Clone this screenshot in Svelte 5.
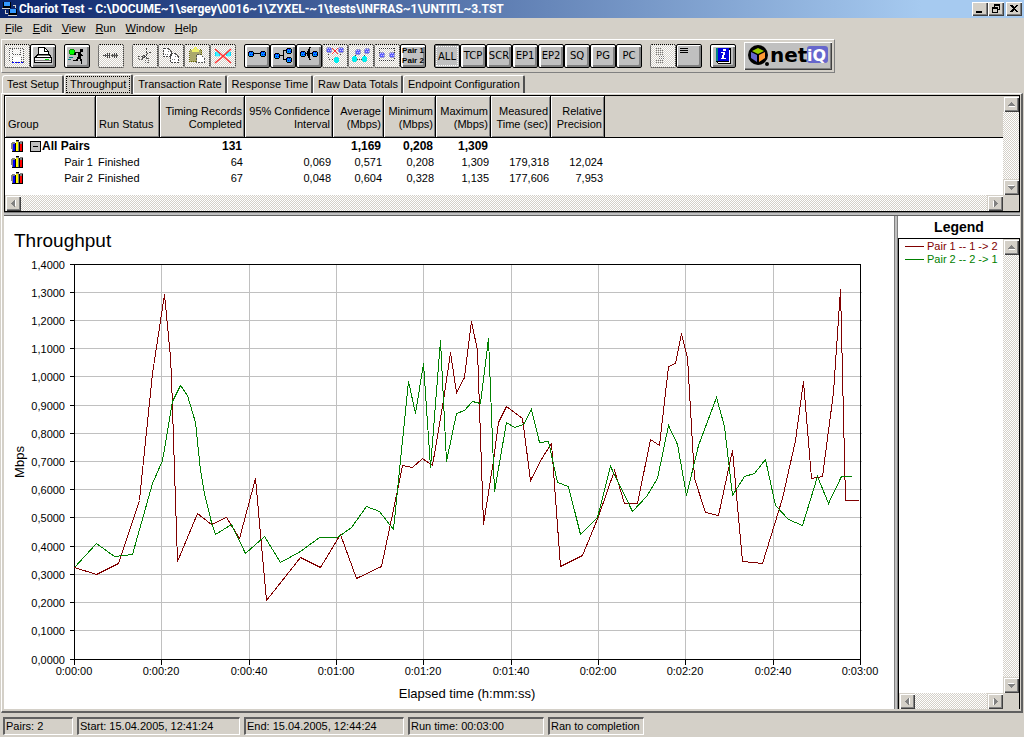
<script lang="ts">
    let activeTab = "Throughput";
    let filter = "ALL";

    const menus = ["File", "Edit", "View", "Run", "Window", "Help"];

    const tools = [
        [
            { icon: "save", title: "Save", off: true },
            { icon: "print", title: "Print" },
        ],
        [{ icon: "run", title: "Run" }],
        [{ icon: "back", title: "Stop", off: true }],
        [
            { icon: "cut", title: "Cut", off: true },
            { icon: "copy", title: "Copy", off: true },
            { icon: "paste", title: "Paste", off: true },
            { icon: "delete", title: "Delete", off: true },
        ],
        [
            { icon: "pair", title: "Add pair" },
            { icon: "group", title: "Add multicast group" },
            { icon: "voip", title: "Add VoIP pair" },
            { icon: "edit", title: "Edit pair", off: true },
            { icon: "replicate", title: "Replicate", off: true },
            { icon: "swap", title: "Swap endpoints", off: true },
            { icon: "pairs", title: "Show pairs" },
        ],
    ];

    const filters = ["ALL", "TCP", "SCR", "EP1", "EP2", "SQ", "PG", "PC"];

    const tabs = [
        "Test Setup",
        "Throughput",
        "Transaction Rate",
        "Response Time",
        "Raw Data Totals",
        "Endpoint Configuration",
    ];

    const columns = [
        ["Timing Records", "Completed"],
        ["95% Confidence", "Interval"],
        ["Average", "(Mbps)"],
        ["Minimum", "(Mbps)"],
        ["Maximum", "(Mbps)"],
        ["Measured", "Time (sec)"],
        ["Relative", "Precision"],
    ];

    const rows = [
        { name: "Pair 1", status: "Finished", cells: ["64", "0,069", "0,571", "0,208", "1,309", "179,318", "12,024"] },
        { name: "Pair 2", status: "Finished", cells: ["67", "0,048", "0,604", "0,328", "1,135", "177,606", "7,953"] },
    ];

    const totals = ["131", "", "1,169", "0,208", "1,309", "", ""];

    const series = [
        {
            label: "Pair 1 -- 1 -> 2",
            color: "#800000",
            points: "74,567 96,574 118,563 139,500 142,470 152,373 164,294 170,357 171,377 174,470 177,561 197,513 211,524 226,517 239,538 255,478 266,600 300,557 320,567 340,534 356,578 381,566 397,490 402,465 412,467 422,458 432,465 443,400 450,352 456,392 464,377 471,321 477,350 483,524 493,460 498,422 506,406 522,418 530,480 542,457 551,443 560,566 582,555 598,516 614,470 624,503 637,503 650,439 659,445 668,366 675,363 681,333 687,357 694,478 705,512 718,515 732,450 742,561 762,563 782,498 795,440 803,381 811,478 822,476 833,392 840,289 845,500 858,500",
        },
        {
            label: "Pair 2 -- 2 -> 1",
            color: "#008000",
            points: "74,567 96,543 114,556 132,554 152,483 162,460 172,401 180,385 187,395 195,422 200,470 204,493 211,522 215,534 231,524 245,553 264,536 280,562 300,551 319,537 337,537 351,527 366,506 379,511 393,529 408,381 415,413 423,363 430,467 440,340 446,461 456,413 464,410 472,401 480,403 488,338 494,491 506,422 514,427 523,424 531,409 539,442 548,441 557,482 568,486 580,534 597,517 610,466 632,511 646,496 657,478 668,425 677,444 686,495 698,445 716,397 724,426 732,495 744,476 754,473 765,459 775,505 788,519 802,525 817,476 828,503 841,476 851,476",
        },
    ];

    // plot area of the graph
    const left = 74;
    const right = 860;
    const top = 264;
    const bottom = 659;

    const yTicks = Array.from({ length: 15 }, (_, i) => ({
        y: Math.floor(bottom - ((bottom - top) * i) / 14),
        text: (i / 10).toFixed(4).replace(".", ","),
    }));

    const xTicks = Array.from({ length: 10 }, (_, i) => ({
        x: Math.round(left + ((right - left) * i) / 9),
        text: `0:0${Math.floor(i / 3)}:${i % 3 === 0 ? "00" : (i % 3) * 20}`,
    }));

    const status = [
        { text: "Pairs: 2", size: "xs" },
        { text: "Start: 15.04.2005, 12:41:24", size: "xl" },
        { text: "End: 15.04.2005, 12:44:24", size: "lg" },
        { text: "Run time: 00:03:00", size: "md" },
        { text: "Ran to completion", size: "sm" },
    ];
</script>

{#snippet node(x, y, pale)}
    <rect x={x + 1} {y} width="4" height="6" fill={pale ? "#99c" : "#000"} />
    <rect {x} y={y + 1} width="6" height="4" fill={pale ? "#99c" : "#000"} />
    <rect x={x + 1} y={y + 1} width="4" height="4" fill={pale ? "#5b5bff" : "#09f"} />
    <path d="M{x + 1} {y + 1}h1v1h-1zM{x + 3} {y + 1}h1v1h-1zM{x + 2} {y + 3}h1v1h-1zM{x + 4} {y + 3}h1v1h-1z" fill={pale ? "#ccf" : "#00f"} />
{/snippet}

{#snippet icon(kind)}
    <svg width="24" height="22" viewBox="0 0 24 22" fill="none" shape-rendering="crispEdges" aria-hidden="true">
        {#if kind === "save"}
            <path d="M5 3h14v15H7l-2-2z" fill="#fff" opacity=".6" />
            <path d="M4.500 3.500h14v14h-12l-2-2zM7.500 3.500v6h8v-6M7.500 17v-5h9v5" stroke="#555" stroke-dasharray="1 1" />
            <path d="M8 12h8v4h-8z" fill="#fff" />
            <path d="M7 17.500h12" stroke="#00f" stroke-dasharray="2 1" />
        {:else if kind === "print"}
            <path d="M7.500 10.500v-8h6l4 4v4" fill="#fff" stroke="#000" />
            <path d="M13.500 2.500v4h4" stroke="#000" />
            <path d="M3 13l3-4h13l2 4v5h-18z" fill="#000" />
            <path d="M5 12l2-2h11l1 2z" fill="#fff" />
            <path d="M4 13h16v4h-16z" fill="#eee" />
            <path d="M7 10h11M4 15.500h16" stroke="#808080" />
            <rect x="14" y="14" width="4" height="1" fill="#0d0" />
        {:else if kind === "run"}
            <rect x="5" y="4" width="4" height="6" fill="#009000" />
            <rect x="4" y="5" width="6" height="4" fill="#009000" />
            <rect x="5" y="5" width="4" height="4" fill="#0f0" />
            <rect x="15" y="4" width="3" height="3" fill="#000" />
            <path d="M10 7h6v1h-6zM9 8h2v2H9zM13 8h3v5h-3zM16 9h1v1h1v1h-2zM12 12h2v2h-2zM14 12h2v2h-2zM15 14h2v2h-2zM16 16h1v3h-1zM11 14h2v2h-2zM8 15h3v1H8z" fill="#000" />
            <path d="M4 12.500h4M3 14.500h3" stroke="#008080" />
        {:else if kind === "back"}
            <path d="M4 10.500h16M6 9.500h5M6 11.500h5M8 8.500h3M8 12.500h3M13 9.500h6M13 11.500h6M15 8.500h4M15 12.500h4" stroke="#444" stroke-dasharray="1 1" />
            <path d="M5 10.500h5M12 10.500h6" stroke="#555" />
        {:else if kind === "cut"}
            <path d="M13.500 3v7l-4 4M4.500 11.500h4l3-1 7-4M11.500 10l3 4" stroke="#444" stroke-dasharray="2 1" />
            <path d="M5.500 11.500h4v3h-4zM12.500 13.500h3v4h-3z" stroke="#666" stroke-dasharray="1 1" />
        {:else if kind === "copy"}
            <path d="M4.500 3.500h5l3 3v5h-8zM11.500 8.500h5l3 3v6h-8z" fill="#fff" stroke="#444" stroke-dasharray="2 1" />
            <path d="M9.500 3.500v3h3M16.500 8.500v3h3M6 9.500h4M13 14.500h4" stroke="#777" stroke-dasharray="1 1" />
        {:else if kind === "paste"}
            <path d="M4.500 4.500h12v12h-12z" fill="#aaa86b" stroke="#666600" stroke-dasharray="1 1" />
            <path d="M7 4h2v-2h3v2h2v3H7z" fill="#eef06a" />
            <path d="M11.500 9.500h4l4 4v4h-8z" fill="#fff" stroke="#555" stroke-dasharray="2 1" />
        {:else if kind === "delete"}
            <path d="M4 7h5v4H4zM15 7h5v4h-5z" fill="#0df" />
            <path d="M5 6h3v6H5zM16 6h3v6h-3z" fill="#7ff" opacity=".6" />
            <path d="M4 4l16 14M4 18l6-5 10-9" stroke="#f33" stroke-width="1.500" shape-rendering="auto" />
        {:else if kind === "pair"}
            <path d="M8 8.500h8" stroke="#000" />
            {@render node(3, 6, false)}
            {@render node(15, 6, false)}
        {:else if kind === "group"}
            <path d="M8 10.500h4M12.500 5.500v9M12 5.500h4M12 14.500h4" stroke="#000" />
            {@render node(3, 8, false)}
            {@render node(15, 3, false)}
            {@render node(15, 12, false)}
        {:else if kind === "voip"}
            <path d="M8 8.500h8" stroke="#000" />
            <path d="M12 2h2v1h-1v11h1v1h-2v-2h-1V4h1zM10 6h1v5h-1z" fill="#000" />
            {@render node(3, 6, false)}
            {@render node(15, 6, false)}
        {:else if kind === "edit"}
            <path d="M9 3l6 6M15 3l-6 6" stroke="#f33" />
            <path d="M5.500 9v5.500h5M17.500 9v3" stroke="#444" stroke-dasharray="1 2" />
            {@render node(3, 2, true)}
            {@render node(15, 2, true)}
            <path d="M12 12h3v6h-3zM11 13h5v4h-5z" fill="#0ee" />
        {:else if kind === "replicate"}
            <path d="M6 11l6-6M13 14l6-8M8 14.500h5" stroke="#444" stroke-dasharray="1 1" />
            {@render node(6, 4, true)}
            {@render node(15, 3, true)}
            <path d="M3 12h5v4H3zM4 11h3v6H4zM13 12h5v4h-5zM14 11h3v6h-3z" fill="#0ee" />
        {:else if kind === "swap"}
            <path d="M4 3.500h16M4 15.500h16M4.500 3v12M19.500 3v12" stroke="#333" stroke-dasharray="1 1" />
            {@render node(4, 7, true)}
            {@render node(14, 7, true)}
        {:else if kind === "lines"}
            <path d="M5 3.500h5M5 5.500h8M5 7.500h8M5 9.500h8M8 11.500h5M8 13.500h5M5 15.500h8M5 17.500h8" stroke="#777" stroke-dasharray="1 1" />
        {:else if kind === "summary"}
            <path d="M3 3.500h8M3 5.500h8M3 7.500h8" stroke="#000" />
        {:else if kind === "info"}
            <path d="M5 3h15v16H7l-2-2z" fill="#000" />
            <path d="M6 17h12v1H7zM18 5h1v13h-1z" fill="#fff" />
            <path d="M7 3h11v13H7z" fill="#0000e0" />
            <path d="M5 3h2v13H5z" fill="#008080" />
            <path d="M12 4h3v2h-3zM10 7h4l-1 6h2v1h-5v-1h1l1-5h-2z" fill="#fff" />
        {/if}
    </svg>
{/snippet}

{#snippet arrow(dir)}
    <button class="arrow" aria-label="Scroll {dir}">
        <svg class={dir} width="7" height="7" viewBox="0 0 7 7" shape-rendering="crispEdges">
            <path d="M1 6h7L4 2z" fill="#fff" />
            <path d="M0 5h7L3.500 1z" fill="#808080" />
        </svg>
    </button>
{/snippet}

{#snippet bars()}
    <svg class="bars" width="13" height="12" viewBox="0 0 13 12" shape-rendering="crispEdges" aria-hidden="true">
        <path d="M0 3h1V2h3v1h1V0h3v2h1V1h3v10H1V9H0z" fill="#808080" />
        <path d="M4 3h1v8H4zM8 2h1v9H8zM11 2h1v9h-1zM1 11h11v1H1zM5 0h3v1H5z" fill="#000" />
        <path d="M2 4h2v7H2z" fill="#00f" />
        <path d="M5 2h2v9H5z" fill="#ff0" />
        <path d="M9 4h2v7H9z" fill="#f00" />
    </svg>
{/snippet}

<div class="window">
    <header class="titlebar">
        <svg width="16" height="16" viewBox="0 0 16 16" shape-rendering="crispEdges" aria-hidden="true">
            <path d="M1 1h8v6H1zM7 8h8v6H7z" fill="#000" />
            <path d="M2 1h6v4H2zM8 8h6v4H8z" fill="#39f" />
            <path d="M0 7h8v1H0zM6 14h9v1H6z" fill="#ccc" />
            <path d="M3 9v3h3M11 4h2v3" fill="none" stroke="#d4d0c8" />
        </svg>
        <h1>Chariot Test - C:\DOCUME~1\sergey\0016~1\ZYXEL-~1\tests\INFRAS~1\UNTITL~3.TST</h1>
        <div class="controls">
            <button aria-label="Minimize">
                <svg width="12" height="10" shape-rendering="crispEdges"><path d="M2 7h6v2H2z" /></svg>
            </button>
            <button aria-label="Restore">
                <svg width="12" height="10" shape-rendering="crispEdges">
                    <path d="M4 0h6v6H8V5h1V2H5v1H4zM2 3h6v6H2zM3 5v3h4V5z" fill-rule="evenodd" />
                </svg>
            </button>
            <button class="close" aria-label="Close">
                <svg width="12" height="10" shape-rendering="crispEdges">
                    <path d="M2 1h2l2 2 2-2h2L7 4.500 10 8H8L6 6 4 8H2l3-3.500z" />
                </svg>
            </button>
        </div>
    </header>

    <nav class="menu">
        {#each menus as item}
            <button><u>{item[0]}</u>{item.slice(1)}</button>
        {/each}
    </nav>

    <div class="toolbar">
        {#each tools as group}
            <div class="group">
                {#each group as tool}
                    <button class="tool" class:off={tool.off} disabled={tool.off} aria-label={tool.title}>
                        {#if tool.icon === "pairs"}
                            <span class="pairs">Pair 1<br />Pair 2</span>
                        {:else}
                            {@render icon(tool.icon)}
                        {/if}
                    </button>
                {/each}
            </div>
        {/each}
        <div class="group">
            {#each filters as name}
                <button class="tool filter" class:pressed={filter === name} on:click={() => (filter = name)}>{name}</button>
            {/each}
        </div>
        <div class="group">
            <button class="tool off" disabled aria-label="Details">{@render icon("lines")}</button>
            <button class="tool flat" aria-label="Summary">{@render icon("summary")}</button>
        </div>
        <div class="group">
            <button class="tool" aria-label="Help">{@render icon("info")}</button>
        </div>
        <button class="brand" aria-label="NetIQ">
            <svg width="84" height="24" viewBox="0 0 84 24">
                <circle cx="12" cy="11" r="10" fill="#000" />
                <path d="M6 7l6-3 6 3-6 3z" fill="#9c0" />
                <path d="M5 8l6 3v7l-6-4z" fill="#66c" />
                <path d="M19 8l-6 3v7l6-4z" fill="#f93" />
                <circle cx="21" cy="20" r="2" fill="#000" />
                <text x="24" y="18" class="net">net</text>
                <rect x="61" y="2" width="21" height="17" rx="3" fill="#66c" />
                <text x="61" y="17" class="iq">iQ</text>
            </svg>
        </button>
    </div>

    <div class="tabs" role="tablist">
        {#each tabs as tab}
            <button role="tab" aria-selected={tab === activeTab} class:active={tab === activeTab} on:click={() => (activeTab = tab)}>
                <span>{tab}</span>
            </button>
        {/each}
    </div>

    <main>
        <section class="results">
            <div class="sheet">
                <table>
                    <colgroup>
                        <col class="c-group" /><col class="c-status" /><col class="c-timing" />
                        <col class="c-conf" /><col class="c-avg" /><col class="c-min" />
                        <col class="c-max" /><col class="c-time" /><col class="c-prec" /><col />
                    </colgroup>
                    <thead>
                        <tr>
                            <th class="start">Group</th>
                            <th class="start">Run Status</th>
                            {#each columns as col}
                                <th>{col[0]}<br />{col[1]}</th>
                            {/each}
                            <th class="rest"></th>
                        </tr>
                    </thead>
                    <tbody>
                        <tr class="total">
                            <td class="name">
                                <div>
                                    {@render bars()}
                                    <button class="toggle" aria-label="Collapse"></button>
                                    <span>All Pairs</span>
                                </div>
                            </td>
                            <td></td>
                            {#each totals as cell}
                                <td>{cell}</td>
                            {/each}
                            <td></td>
                        </tr>
                        {#each rows as row}
                            <tr>
                                <td class="name">
                                    <div>
                                        {@render bars()}
                                        <span class="child">{row.name}</span>
                                    </div>
                                </td>
                                <td class="start">{row.status}</td>
                                {#each row.cells as cell}
                                    <td>{cell}</td>
                                {/each}
                                <td></td>
                            </tr>
                        {/each}
                    </tbody>
                </table>
            </div>
            <div class="vscroll">{@render arrow("up")}{@render arrow("down")}</div>
            <div class="hscroll">{@render arrow("left")}{@render arrow("right")}</div>
        </section>

        <div class="split"></div>

        <div class="lower">
            <section class="graph">
                <svg viewBox="4 216 890 493" role="img" aria-label="Throughput">
                    <text x="14" y="247" class="heading">Throughput</text>
                    <g shape-rendering="crispEdges" fill="none" transform="translate(0.5 0.5)">
                        {#each yTicks.slice(1, -1) as t}
                            <path d="M{left} {t.y}H{right + 1}" stroke="#c0c0c0" />
                        {/each}
                        {#each xTicks.slice(1, -1) as t}
                            <path d="M{t.x} {top}V{bottom}" stroke="#c0c0c0" />
                        {/each}
                        <rect x={left} y={top} width={right - left} height={bottom - top} stroke="#000" />
                        {#each yTicks as t}
                            <path d="M{left - 5} {t.y}H{left}" stroke="#000" />
                        {/each}
                        {#each xTicks as t}
                            <path d="M{t.x} {bottom}v5" stroke="#000" />
                        {/each}
                        {#each series as s}
                            <polyline points={s.points} stroke={s.color} />
                        {/each}
                    </g>
                    {#each yTicks as t}
                        <text x="65" y={t.y + 5} text-anchor="end">{t.text}</text>
                    {/each}
                    {#each xTicks as t}
                        <text x={t.x} y="675" text-anchor="middle">{t.text}</text>
                    {/each}
                    <text class="axis" x="467" y="698" text-anchor="middle">Elapsed time (h:mm:ss)</text>
                    <text class="axis" transform="translate(24 462) rotate(-90)" text-anchor="middle">Mbps</text>
                </svg>
            </section>
            <div class="vsplit"></div>
            <aside class="legend">
                <h2>Legend</h2>
                <div class="legend-body">
                    <ul>
                        {#each series as s}
                            <li style:color={s.color}><i></i>{s.label}</li>
                        {/each}
                    </ul>
                    <div class="vscroll">{@render arrow("up")}{@render arrow("down")}</div>
                    <div class="hscroll">{@render arrow("left")}{@render arrow("right")}</div>
                </div>
            </aside>
        </div>
    </main>

    <footer>
        {#each status as s}
            <span class={s.size}>{s.text}</span>
        {/each}
    </footer>
</div>

<style>
    :global(body) {
        background: #d4d0c8;
    }

    .window {
        font: 11px/13px "Liberation Sans", Arial, sans-serif;
        color: #000;
    }

    button {
        font: inherit;
        color: inherit;
        background: #d4d0c8;
        border: none;
        padding: 0;
        margin: 0;
        box-sizing: border-box;
    }

    svg {
        display: block;
    }

    .titlebar {
        display: flex;
        align-items: center;
        height: 18px;
        padding: 0 2px;
        background: linear-gradient(to right, #0a246a, #a6caf0 90%);
    }

    h1 {
        flex: 1;
        margin: 0 0 0 1px;
        font: bold 12px/18px Roboto, "DejaVu Sans Condensed", sans-serif;
        color: #fff;
        white-space: nowrap;
        overflow: hidden;
    }

    .controls {
        display: flex;
    }

    .controls button {
        width: 16px;
        height: 14px;
        padding: 2px;
        box-shadow: inset 1px 1px #fff, inset -1px -1px #404040, inset -2px -2px #808080;
    }

    .controls .close {
        margin-left: 2px;
    }

    .menu {
        display: flex;
        height: 21px;
    }

    .menu button {
        padding: 0 5px;
    }

    .toolbar {
        display: flex;
        align-items: center;
        gap: 8px;
        width: fit-content;
        height: 34px;
        box-sizing: border-box;
        margin-left: 1px;
        padding: 0 2px;
        border: 1px solid #808080;
        border-top-color: #fff;
        border-left-color: #fff;
    }

    .group {
        display: flex;
    }

    .tool {
        width: 26px;
        height: 24px;
        border: 1px solid #000;
        border-radius: 2px;
        background: #c0c0c0;
        box-shadow: inset 2px 2px #fff, inset -2px -2px #808080;
    }

    .tool.off {
        border: 1px dotted #000;
        background: repeating-conic-gradient(#d4d0c8 0 25%, #fff 0 50%) 0 0 / 2px 2px;
        box-shadow: none;
    }

    .tool.flat {
        box-shadow: inset 1px 1px #fff, inset -2px -2px #808080;
    }

    .filter {
        font: 10px/20px "DejaVu Sans", Verdana, sans-serif;
    }

    .filter.pressed {
        padding-top: 2px;
        box-shadow: inset 1px 1px #808080;
        outline: 1px dotted #fff;
        outline-offset: -3px;
    }

    .pairs {
        display: block;
        font: bold 8px/10px "Liberation Sans", Arial, sans-serif;
        white-space: nowrap;
    }

    .brand {
        width: 88px;
        height: 28px;
        padding: 2px;
        background: #c0c0c0;
        box-shadow: inset 1px 1px #fff, inset -1px -1px #404040, inset -2px -2px #808080;
    }

    .net,
    .iq {
        font: bold 20px "DejaVu Sans", Verdana, sans-serif;
    }

    .iq {
        font-size: 16px;
        fill: #fff;
    }

    .tabs {
        display: flex;
        align-items: flex-end;
        height: 20px;
        padding-left: 2px;
    }

    .tabs button {
        height: 18px;
        padding: 0 3px 0 4px;
        border: 1px solid #fff;
        border-right: 2px solid #505050;
        border-bottom: none;
        border-radius: 3px 2px 0 0;
    }

    .tabs .active {
        height: 20px;
        padding: 0 1px;
        margin-bottom: -1px;
        position: relative;
    }

    .active span {
        display: block;
        height: 17px;
        padding: 0 4px;
        line-height: 16px;
        outline: 1px dotted #000;
        outline-offset: -1px;
    }

    main {
        margin: 0 1px;
        padding: 1px 1px 2px 2px;
        border: 1px solid #fff;
        border-right: 2px solid #606060;
        border-bottom: 2px solid #606060;
    }

    .results {
        display: grid;
        grid-template-columns: 1fr 16px;
        border: 1px solid #000;
    }

    .sheet {
        overflow: hidden;
        background: #fff;
        padding-bottom: 9px;
    }

    table {
        width: 100%;
        table-layout: fixed;
        border-collapse: separate;
        border-spacing: 0;
    }

    .c-group { width: 91px; }
    .c-status { width: 64px; }
    .c-timing { width: 85px; }
    .c-conf { width: 88px; }
    .c-avg { width: 51px; }
    .c-min { width: 52px; }
    .c-max { width: 55px; }
    .c-time { width: 60px; }
    .c-prec { width: 54px; }

    th {
        height: 42px;
        box-sizing: border-box;
        padding: 0 2px 6px;
        font-weight: normal;
        text-align: right;
        vertical-align: bottom;
        white-space: nowrap;
        background: #d4d0c8;
        border-right: 1px solid #000;
        border-bottom: 1px solid #000;
        box-shadow: inset 1px 1px #fff, inset -1px -1px #808080;
    }

    th.start {
        text-align: left;
        padding-left: 3px;
    }

    th.rest {
        border-right: none;
        box-shadow: none;
    }

    td {
        height: 16px;
        padding: 0 2px;
        line-height: 16px;
        text-align: right;
        white-space: nowrap;
    }

    td.start {
        text-align: left;
    }

    .total {
        font-size: 12px;
        font-weight: bold;
    }

    .total td {
        padding-right: 3px;
    }

    .name div {
        display: flex;
        align-items: center;
        padding-left: 4px;
    }

    .toggle {
        flex: none;
        width: 11px;
        height: 11px;
        margin: 0 1px 0 6px;
        border: 1px solid #000;
        background: linear-gradient(#000, #000) center / 5px 1px no-repeat #c0c0c0;
    }

    .bars {
        flex: none;
    }

    .child {
        margin-left: auto;
        padding-right: 1px;
    }

    .vscroll,
    .hscroll {
        display: flex;
        justify-content: space-between;
        background: repeating-conic-gradient(#d4d0c8 0 25%, #fff 0 50%) 0 0 / 2px 2px;
    }

    .vscroll {
        flex-direction: column;
    }

    .arrow {
        display: flex;
        align-items: center;
        justify-content: center;
        width: 16px;
        height: 16px;
        box-shadow: inset 1px 1px #d4d0c8, inset 2px 2px #fff, inset -1px -1px #404040, inset -2px -2px #808080;
    }

    .down { transform: rotate(180deg); }
    .left { transform: rotate(-90deg); }
    .right { transform: rotate(90deg); }

    .split {
        height: 4px;
        background: linear-gradient(#808080 1px, #c0c0c0 1px 3px, #606060 3px);
    }

    .lower {
        display: flex;
    }

    .graph {
        flex: 1;
        min-width: 0;
        background: #fff;
    }

    .graph svg {
        width: 100%;
    }

    .heading {
        font-size: 19px;
    }

    .axis {
        font-size: 13px;
    }

    .vsplit {
        width: 4px;
        background: linear-gradient(to right, #808080 1px, #c0c0c0 1px 3px, #808080 3px);
    }

    .legend {
        display: flex;
        flex-direction: column;
        width: 122px;
        background: #fff;
    }

    h2 {
        margin: 0;
        font-size: 14px;
        line-height: 22px;
        text-align: center;
    }

    .legend-body {
        flex: 1;
        display: grid;
        grid-template: 1fr 16px / 1fr 16px;
        background: #d4d0c8;
        border: 1px solid #000;
        border-bottom: none;
    }

    ul {
        margin: 0;
        padding: 1px 0 0 6px;
        list-style: none;
        background: #fff;
    }

    li {
        display: flex;
        align-items: center;
        gap: 3px;
        white-space: nowrap;
    }

    li i {
        width: 19px;
        border-top: 1px solid;
    }

    footer {
        display: flex;
        gap: 4px;
        padding: 4px 3px 2px;
    }

    footer span {
        box-sizing: border-box;
        height: 18px;
        padding: 0 1px;
        line-height: 15px;
        white-space: nowrap;
        border: 1px solid #fff;
        border-top: 2px solid #606060;
        border-left: 2px solid #606060;
    }

    .xs { width: 70px; }
    .sm { width: 96px; }
    .md { width: 136px; }
    .lg { width: 160px; }
    .xl { width: 163px; }
</style>
